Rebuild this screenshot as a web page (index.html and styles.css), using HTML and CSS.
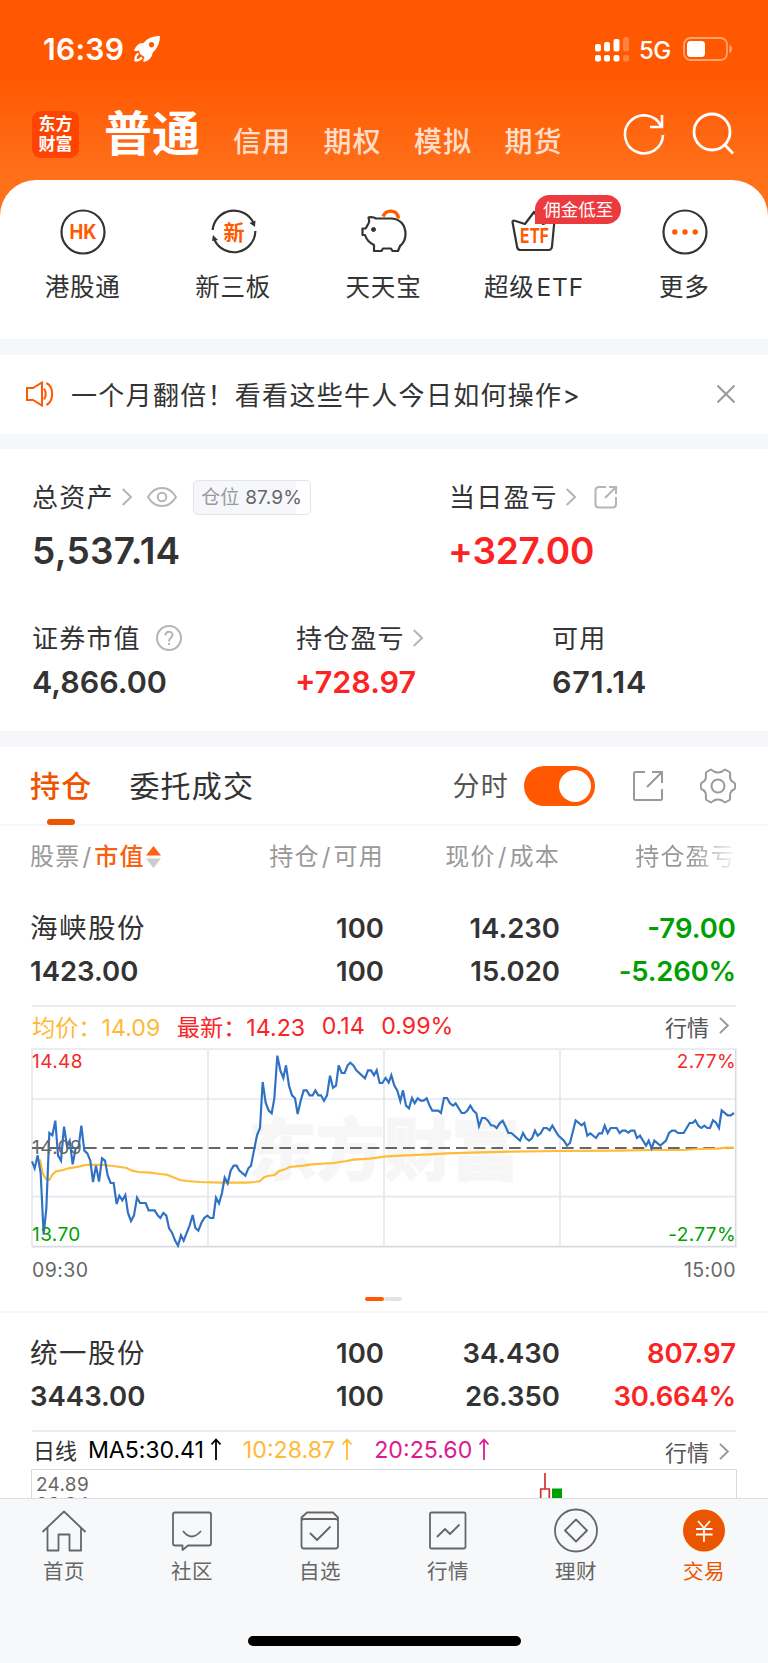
FILE: index.html
```
<!DOCTYPE html>
<html lang="zh-CN">
<head>
    <meta charset="UTF-8">
    <meta name="viewport" content="width=device-width, initial-scale=1.0">
    <title>交易</title>
    <link rel="stylesheet" href="styles.css">
</head>
<body>
    <header class="header">
        <div class="status">
            <span class="time">16:39</span>
            <svg class="rocket" width="28" height="28" viewBox="0 0 28 28">
                <path fill="#fff" fill-rule="evenodd" d="M27 1C20 1 14 3.500 10.500 8C6 7.500 3 10.500 1 15.500C3 16.500 4.500 16 6 15.500L7 19L11.500 22C11 23.500 10 25 10.500 27C16 26 19.500 21.500 19.500 18C24 13.500 27 8 27 1ZM18.500 7A2.700 2.700 0 1 1 18.490 7Z"/>
                <path fill="none" stroke="#fff" stroke-width="2.200" d="M5.500 18.500C3 20 2.300 22.500 2.500 25.500C5.500 25.500 7.500 24.500 9 22.500"/>
            </svg>
            <svg class="signal" width="34" height="25" viewBox="0 0 34 25" fill="#fff">
                <rect x="0" y="7" width="6" height="7.500" rx="2"/>
                <rect x="9" y="5" width="6" height="9.500" rx="2"/>
                <rect x="18.500" y="2" width="6" height="12.500" rx="2"/>
                <rect x="28" y="0" width="6" height="14.500" rx="2" opacity=".25"/>
                <rect x="0" y="18" width="6" height="6.500" rx="2"/>
                <rect x="9" y="18" width="6" height="6.500" rx="2"/>
                <rect x="18.500" y="18" width="6" height="6.500" rx="2"/>
                <rect x="28" y="18" width="6" height="6.500" rx="2" opacity=".25"/>
            </svg>
            <span class="network">5G</span>
            <svg class="battery" width="50" height="24" viewBox="0 0 50 24">
                <rect x="1" y="1" width="43" height="22" rx="6.500" fill="none" stroke="#fff" stroke-width="1.800" opacity=".45"/>
                <rect x="4" y="4" width="18" height="16" rx="3.500" fill="#fff"/>
                <path d="M46.500 8V16Q49 15 49 12T46.500 8Z" fill="#fff" opacity=".5"/>
            </svg>
        </div>
        <nav class="accounts">
            <div class="logo">东方<br>财富</div>
            <strong>普通</strong>
            <span>信用</span>
            <span>期权</span>
            <span>模拟</span>
            <span>期货</span>
            <svg class="refresh" width="44" height="44" viewBox="0 0 44 44" fill="none" stroke="#fff" stroke-width="2.600">
                <path d="M38.800 13.500A19 19 0 1 0 41 23M40 3V15H28"/>
            </svg>
            <svg class="search" width="44" height="44" viewBox="0 0 44 44" fill="none" stroke="#fff" stroke-width="2.800">
                <circle cx="21" cy="20" r="18"/>
                <path d="M33 32L42 41.500"/>
            </svg>
        </nav>
    </header>

    <section class="menu">
        <a class="menu-item">
            <svg width="50" height="50" viewBox="0 0 50 50">
                <circle cx="25" cy="25" r="21.500" fill="none" stroke="#333" stroke-width="2.200"/>
                <text class="icon-text" x="25" y="32" font-size="19.500" textLength="27" lengthAdjust="spacingAndGlyphs">HK</text>
            </svg>
            <span>港股通</span>
        </a>
        <a class="menu-item">
            <svg width="50" height="50" viewBox="0 0 50 50">
                <path fill="none" stroke="#333" stroke-width="2.200" d="M3.600 23A21.500 21.500 0 0 1 44.500 16M46.400 24A21.500 21.500 0 0 1 5.500 33"/>
                <path fill="#333" d="M40.500 16L46.500 13.500L46 20ZM3 34L4 28L9 33Z"/>
                <text class="icon-text" x="25" y="32.500" font-size="21">新</text>
            </svg>
            <span>新三板</span>
        </a>
        <a class="menu-item">
            <svg width="50" height="50" viewBox="0 0 50 50" fill="none" stroke="#333" stroke-width="2.200" stroke-linejoin="round">
                <path d="M17 11.500C14 9.500 12 10 9.500 10.500C10.500 13 10.500 14.500 9.500 16.500C8.500 18 8 20 6.500 21.500H3.500V28H6C7.500 32.500 10.500 36 15 38V44H22.500L24 41.500H32L33.500 44H39L41 39C45 36 46.500 31 46.500 27C46.500 18 41 12 33 11.500Z"/>
                <circle cx="14.500" cy="22.500" r="2" fill="#333" stroke-width="1"/>
                <path stroke="#ff5a00" stroke-width="3.400" d="M24 9.500C27 2.500 38 1.500 39.500 11.500"/>
            </svg>
            <span>天天宝</span>
        </a>
        <a class="menu-item">
            <svg width="50" height="50" viewBox="0 0 50 50">
                <path fill="none" stroke="#333" stroke-width="2.200" stroke-linejoin="round" d="M6.500 14L16 17L25 5L34 17L45.500 13L43 39.500Q42.700 43 39.500 43H11.500Q8.500 43 8 39.500L3.500 15Q3.500 13 6.500 14Z"/>
                <text class="icon-text" x="25.500" y="36" font-size="20" textLength="29" lengthAdjust="spacingAndGlyphs">ETF</text>
            </svg>
            <span>超级<small>ETF</small></span>
            <em class="badge">佣金低至</em>
        </a>
        <a class="menu-item">
            <svg width="50" height="50" viewBox="0 0 50 50">
                <circle cx="25" cy="25" r="21.500" fill="none" stroke="#333" stroke-width="2.200"/>
                <g fill="#ff5a00"><circle cx="14.800" cy="25" r="2.700"/><circle cx="25" cy="25" r="2.700"/><circle cx="35.200" cy="25" r="2.700"/></g>
            </svg>
            <span>更多</span>
        </a>
    </section>

    <section class="notice">
        <svg width="28" height="26" viewBox="0 0 28 26" fill="none" stroke="#ff5a00" stroke-width="2">
            <path d="M1 7H7L16 1.500V24.500L7 19H1ZM18 7.500Q21.500 13 18 18.500M20.500 2C28 6 28 20 20.500 24"/>
        </svg>
        <p>一个月翻倍！看看这些牛人今日如何操作&gt;</p>
        <svg width="18" height="18" viewBox="0 0 18 18" fill="none" stroke="#999" stroke-width="2"><path d="M.5.500L17.500 17.500M17.500.5L.5 17.500"/></svg>
    </section>

    <section class="assets">
        <div class="assets-top">
            <div class="asset">
                <div class="label"><span>总资产</span>
                    <svg class="arrow" width="10" height="18" viewBox="0 0 10 18"><path d="M.7 1L9 9L.7 17"/></svg>
                    <svg class="eye" width="30" height="20" viewBox="0 0 30 20"><path d="M1 10C8-2 22-2 29 10C22 22 8 22 1 10Z"/><circle cx="15" cy="10" r="4.300"/></svg>
                    <div class="ratio">仓位 <b>87.9%</b></div>
                </div>
                <div class="value big">5,537.14</div>
            </div>
            <div class="asset">
                <div class="label"><span>当日盈亏</span>
                    <svg class="arrow" width="10" height="18" viewBox="0 0 10 18"><path d="M.7 1L9 9L.7 17"/></svg>
                    <svg class="share" width="24" height="24" viewBox="0 0 24 24"><path d="M12 2H5Q1.500 2 1.500 5.500V19Q1.500 22.500 5 22.500H18.500Q22 22.500 22 19V12M11 13L21.500 2.500M15 2H22V9"/></svg>
                </div>
                <div class="value big red">+327.00</div>
            </div>
        </div>
        <div class="assets-bottom">
            <div class="asset">
                <div class="label"><span>证券市值</span>
                    <svg class="help" width="26" height="26" viewBox="0 0 26 26"><circle cx="13" cy="13" r="12"/><path d="M9.500 10.500C9.500 5.500 16.500 5.500 16.500 10C16.500 12.500 13 12.500 13 16.500M13 18V20"/></svg>
                </div>
                <div class="value">4,866.00</div>
            </div>
            <div class="asset">
                <div class="label"><span>持仓盈亏</span>
                    <svg class="arrow" width="10" height="18" viewBox="0 0 10 18"><path d="M.7 1L9 9L.7 17"/></svg>
                </div>
                <div class="value red">+728.97</div>
            </div>
            <div class="asset">
                <div class="label"><span>可用</span></div>
                <div class="value last-value">671.14</div>
            </div>
        </div>
    </section>

    <section class="positions">
        <div class="tabs">
            <span class="tab active">持仓</span>
            <span class="tab">委托成交</span>
            <span class="mode">分时</span>
            <span class="switch"></span>
            <svg class="export" width="32" height="32" viewBox="0 0 32 32" fill="none" stroke="#999" stroke-width="2">
                <path d="M13 2H3.500Q2 2 2 3.500V28.500Q2 30 3.500 30H28.500Q30 30 30 28.500V19M15 17L30 2M20 2H30V13"/>
            </svg>
            <svg class="gear" width="36" height="36" viewBox="0 0 36 36" fill="none" stroke="#999" stroke-width="2" stroke-linejoin="round">
                <path d="M11 1.500L14 3.500Q18 5.500 22 3.500L25 1.500L29.500 4Q30.500 5 30 8Q30 13 34 14.500Q35.300 15.500 35.300 18T34 21.500Q30 23 30 28Q30.500 31 29.500 32L25 34.500L22 32.500Q18 30.500 14 32.500L11 34.500L6.500 32Q5.500 31 6 28Q6 23 2 21.500Q.7 20.500.7 18T2 14.500Q6 13 6 8Q5.500 5 6.500 4Z"/>
                <circle cx="18" cy="18" r="6.500"/>
            </svg>
        </div>

        <div class="row head">
            <div>股票<i>/</i><b>市值</b><svg width="15" height="22" viewBox="0 0 15 22"><path fill="#ff6114" d="M7.500 0L15 9.500H0Z"/><path fill="#ccc" d="M7.500 22L15 12.500H0Z"/></svg></div>
            <div>持仓<i>/</i>可用</div>
            <div>现价<i>/</i>成本</div>
            <div class="fade">持仓盈亏</div>
        </div>

        <div class="stock">
            <div class="row">
                <div><span class="name">海峡股份</span><br>1423.00</div>
                <div>100<br>100</div>
                <div>14.230<br>15.020</div>
                <div class="green">-79.00<br><span class="percent">-5.260%</span></div>
            </div>
            <div class="quote">
                <span class="avg">均价：14.09</span>
                <span class="last">最新：14.23</span>
                <span class="last">0.14</span>
                <span class="last">0.99%</span>
                <a>行情<svg width="10" height="17" viewBox="0 0 10 18"><path d="M.7 1L9 9L.7 17"/></svg></a>
            </div>
            <svg class="chart" width="706" height="200" viewBox="93 54 2118 600" fill="none">
                <g class="watermark"><text x="745" y="434" textLength="815">东方财富</text></g>
                <g stroke="#e6e8f0" stroke-width="5">
                    <path d="M96 207H2208M96 500H2208M624 60V648M1152 60V648M1680 60V648"/>
                    <path d="M96 650V57H2208"/>
                    <path stroke="#d8dbe3" d="M96 650H2207V57"/>
                </g>
                <path stroke="#666" stroke-width="6" stroke-dasharray="35 18" d="M96 354H2202"/>
                <path stroke="#ffbc38" stroke-width="6.500" d="M120 388L128 430L137 446L148 450L157 434L168 424L190 420L205 415L240 409L255 405L275 404L310 405L340 408L380 414L396 422L415 426L450 428L480 432L500 434L520 442L540 450L560 453L600 456L660 458L740 458L765 456L780 453L792 442L802 438L824 435L836 424L855 418L868 411L910 407L935 403L1000 399L1040 393L1060 389L1110 386L1152 380L1200 377L1290 373L1340 370L1440 367L1530 365L1680 363L1860 362L1950 360L2050 360L2090 357L2150 356L2180 353L2202 353"/>
                <path stroke="#2f72c3" stroke-width="6.500" d="M96 394L104 415L113 376L122 430L131 614L139 535L148 309L157 316L166 272L174 376L183 392L192 290L201 348L209 332L218 403L227 355L236 350L244 287L253 362L262 370L271 392L279 456L288 407L297 455L306 385L315 392L323 436L332 459L341 459L350 522L358 497L367 511L376 495L384 549L393 573L402 556L411 503L420 519L437 519L446 541L464 541L473 556L481 564L490 549L499 557L507 594L516 608L525 631L534 647L543 616L551 632L569 586L578 555L586 594L595 602L604 579L613 564L622 557L631 564L640 564L648 503L657 520L666 489L674 443L683 460L692 422L701 407L710 407L718 422L736 437L745 415L753 407L762 361L771 316L780 294L788 156L797 218L806 242L815 250L823 205L832 77L841 121L850 144L858 106L867 167L876 196L885 205L893 252L902 212L911 181L920 181L929 196L938 196L946 181L955 196L963 196L972 212L981 196L990 137L999 173L1008 167L1016 106L1025 129L1034 129L1043 106L1051 98L1060 106L1069 121L1095 145L1104 121L1113 121L1122 136L1130 121L1139 159L1147 159L1157 144L1166 158L1174 136L1183 167L1192 182L1201 213L1209 181L1218 227L1227 235L1236 204L1244 220L1253 205L1262 212L1271 212L1280 205L1289 227L1297 242L1315 242L1323 249L1332 204L1341 204L1350 220L1359 227L1367 220L1385 249L1394 249L1402 242L1411 227L1420 242L1429 250L1437 289L1446 264L1455 264L1464 272L1473 286L1482 287L1490 294L1499 280L1508 272L1517 290L1525 309L1534 309L1560 332L1569 309L1578 325L1587 332L1596 325L1605 302L1613 317L1622 310L1631 294L1640 294L1649 301L1657 287L1675 317L1692 332L1701 347L1710 339L1727 271L1745 286L1753 279L1762 317L1771 310L1788 324L1797 310L1806 310L1814 287L1823 309L1832 294L1850 294L1859 309L1867 302L1876 302L1885 308L1893 302L1903 302L1911 324L1920 317L1938 347L1946 332L1955 355L1963 332L1981 347L1998 332L2007 309L2016 302L2025 302L2034 309L2051 309L2069 279L2078 279L2086 271L2095 287L2104 294L2113 287L2122 294L2130 294L2139 271L2148 278L2157 294L2165 241L2183 256L2192 256L2202 249"/>
                <g class="scale">
                    <text x="96" y="114" fill="#f22b2b">14.48</text>
                    <text x="96" y="373" fill="#666">14.09</text>
                    <text x="96" y="632" fill="#00a000">13.70</text>
                    <text x="2208" y="114" fill="#f22b2b" text-anchor="end">2.77%</text>
                    <text x="2208" y="632" fill="#00a000" text-anchor="end">-2.77%</text>
                </g>
            </svg>
            <div class="times"><span>09:30</span><span>15:00</span></div>
            <div class="pager"><i class="on"></i><i></i></div>
        </div>

        <div class="stock second">
            <div class="row">
                <div><span class="name">统一股份</span><br>3443.00</div>
                <div>100<br>100</div>
                <div>34.430<br>26.350</div>
                <div class="red">807.97<br><span class="percent">30.664%</span></div>
            </div>
            <div class="quote ma">
                <span class="day">日线</span>
                <span class="ma5">MA5:30.41<svg width="10" height="23" viewBox="0 0 10 23"><path d="M5 22V2M.5 6.500L5 1.500L9.500 6.500"/></svg></span>
                <span class="ma10">10:28.87<svg width="10" height="23" viewBox="0 0 10 23"><path d="M5 22V2M.5 6.500L5 1.500L9.500 6.500"/></svg></span>
                <span class="ma20">20:25.60<svg width="10" height="23" viewBox="0 0 10 23"><path d="M5 22V2M.5 6.500L5 1.500L9.500 6.500"/></svg></span>
                <a>行情<svg width="10" height="17" viewBox="0 0 10 18"><path d="M.7 1L9 9L.7 17"/></svg></a>
            </div>
            <div class="kline">
                <div>24.89<br>23.84</div>
                <svg width="24" height="30" viewBox="0 0 24 30"><path d="M6 3V19M1.700 30V19H10.300V30" fill="none" stroke="#d32f2f" stroke-width="1.700"/><rect x="13" y="18.500" width="10" height="12" fill="#00a000"/></svg>
            </div>
        </div>
    </section>

    <footer class="tabbar">
        <nav>
            <a><svg width="46" height="46" viewBox="0 0 46 46"><path d="M1.500 24L23 3.500L44.500 24M6.500 20V42.500H17.500V26.500H28.500V42.500H40V20"/></svg>首页</a>
            <a><svg width="46" height="46" viewBox="0 0 46 46"><path d="M6 4.500H40Q42 4.500 42 6.500V35.500Q42 37.500 40 37.500H19L13.500 42V37.500H6Q4 37.500 4 35.500V6.500Q4 4.500 6 4.500ZM14 23Q22.500 34 32 23"/></svg>社区</a>
            <a><svg width="46" height="46" viewBox="0 0 46 46"><path d="M10 4.500H36L41 9.500V38Q41 40.500 38.500 40.500H7Q4.500 40.500 4.500 38V9.500ZM4.500 13Q4.500 11 7 11H38.500Q41 11 41 13M13 25L20 32L33.500 18.500"/></svg>自选</a>
            <a><svg width="46" height="46" viewBox="0 0 46 46"><rect x="5" y="4.500" width="35.500" height="36" rx="1.500"/><path d="M12 29L20 21L25 26L34.500 16.500"/></svg>行情</a>
            <a><svg width="46" height="46" viewBox="0 0 46 46"><circle cx="23" cy="22.500" r="21"/><path d="M23 11.500L34 22.500L23 33.500L12 22.500Z"/></svg>理财</a>
            <a class="active"><svg width="46" height="46" viewBox="0 0 46 46"><circle cx="23" cy="22.500" r="21"/><path d="M17 13L23 20L29 13M15 21H31.500M15 26.500H31.500M23 20V34"/></svg>交易</a>
        </nav>
        <div class="home"></div>
    </footer>
</body>
</html>
```
FILE: styles.css
```
* {
    box-sizing: border-box;
}
body {
    margin: 0;
    width: 768px;
    height: 1663px;
    overflow: hidden;
    display: flex;
    flex-direction: column;
    font-family: Inter, "Noto Sans CJK SC", sans-serif;
    color: #333;
    background-color: #f6f7fa;
}
svg {
    display: block;
    flex: none;
}

/* header */
.header {
    height: 220px;
    flex: none;
    color: #fff;
    background: linear-gradient(#ff5800 75px, #ff701b 175px);
}
.status {
    height: 98px;
    padding: 0 35px 0 43px;
    display: flex;
    align-items: center;
    font-weight: 600;
}
.time {
    width: 83px;
    font-size: 30px;
    letter-spacing: 0.3px;
    white-space: nowrap;
}
.rocket {
    margin-left: 7px;
}
.signal {
    margin-left: auto;
}
.network {
    margin: 3px 12px 0 10px;
    width: 32px;
    font-size: 24px;
    font-weight: 500;
    letter-spacing: -0.5px;
}
.accounts {
    height: 72px;
    padding: 0 33px 0 32px;
    display: flex;
    align-items: center;
}
.logo {
    width: 47px;
    height: 47px;
    border-radius: 9px;
    background-color: #ff4300;
    font-size: 17px;
    font-weight: 700;
    line-height: 20px;
    padding-top: 3px;
    text-align: center;
}
.accounts strong {
    width: 96px;
    margin: 0 33px 0 25px;
    font-size: 48px;
    line-height: 60px;
    white-space: nowrap;
}
.accounts span {
    width: 60px;
    margin: 12px 30.5px 0 0;
    font-size: 28px;
    font-weight: 500;
    letter-spacing: 1px;
    color: rgba(255, 255, 255, 0.8);
}
.refresh {
    margin-left: auto;
}
.search {
    margin-left: 25px;
}

/* quick menu */
.menu {
    height: 159px;
    flex: none;
    margin-top: -40px;
    padding: 27px 8px 0;
    display: grid;
    grid-template-columns: repeat(5, 1fr);
    background-color: #fff;
    border-radius: 36px 36px 0 0;
}
.menu-item {
    position: relative;
    display: flex;
    flex-direction: column;
    align-items: center;
    font-size: 24.5px;
    line-height: 36px;
    letter-spacing: 0.8px;
}
.menu-item span {
    margin: 12px 1px 0 0;
}
.menu-item small {
    margin-left: 2px;
    font-size: 24.5px;
}
.icon-text {
    fill: #ff5a00;
    font-weight: 700;
    text-anchor: middle;
    letter-spacing: 0;
}
.badge {
    position: absolute;
    left: 76px;
    top: -12px;
    width: 86px;
    height: 29px;
    border-radius: 15px 15px 15px 0;
    background-color: #ec3b3f;
    color: #fff;
    font-size: 17.5px;
    font-style: normal;
    line-height: 29px;
    letter-spacing: 0;
    text-align: center;
}

/* notice */
.notice {
    height: 79px;
    flex: none;
    margin: 16px 0;
    padding: 0 33px 2px 26px;
    display: flex;
    align-items: center;
    background-color: #fff;
    font-size: 26px;
}
.notice p {
    flex: 1;
    margin: 0 0 0 17px;
    letter-spacing: 1.3px;
}

/* assets */
.assets {
    height: 282px;
    flex: none;
    margin-top: -1px;
    padding: 27px 0 0 32px;
    background-color: #fff;
}
.assets-top {
    display: grid;
    grid-template-columns: 417px 1fr;
    height: 141px;
}
.assets-bottom {
    display: grid;
    grid-template-columns: 264px 256px 1fr;
}
.label {
    display: flex;
    align-items: center;
    height: 42px;
    font-size: 26px;
    letter-spacing: 1.2px;
}
.label span {
    margin-top: -4px;
}
.label svg {
    fill: none;
    stroke: #b5b5b5;
    stroke-width: 2;
}
.label .arrow {
    margin-left: 8px;
}
.label .eye {
    margin-left: 15px;
}
.label .share {
    margin-left: 18px;
}
.label .help {
    margin-left: 15px;
}
.ratio {
    width: 118px;
    height: 35px;
    margin-left: 16px;
    border: 1px solid #e3e4e8;
    border-radius: 5px;
    background: linear-gradient(90deg, #f6f7fa 87.9%, #fff 87.9%);
    color: #999;
    font-size: 19px;
    line-height: 34px;
    letter-spacing: 0.2px;
    text-align: center;
    white-space: nowrap;
}
.ratio b {
    color: #666;
    font-weight: 400;
}
.value {
    font-size: 30.5px;
    font-weight: 600;
    line-height: 46px;
}
.value.red {
    margin-left: -1px;
}
.value.last-value {
    letter-spacing: 0.8px;
}
.value.big {
    font-size: 37px;
    line-height: 66px;
    letter-spacing: 0.3px;
}
.value.big.red {
    letter-spacing: -0.2px;
}
.red {
    color: #fb2424;
}
.green {
    color: #00a000;
}

/* positions */
.positions {
    flex: 1;
    min-height: 0;
    overflow: hidden;
    margin-top: 16px;
    background-color: #fff;
}
.tabs {
    height: 79px;
    padding: 0 32px 0 30px;
    display: flex;
    align-items: center;
    border-bottom: 2px solid #f6f7f9;
    font-size: 30px;
    letter-spacing: 1.2px;
}
.tab {
    margin: -4px 37px 0 0;
}
.tab.active {
    position: relative;
    color: #ee5500;
    font-weight: 500;
}
.tab.active::after {
    content: "";
    position: absolute;
    left: 17px;
    bottom: -19px;
    width: 28px;
    height: 6px;
    border-radius: 3px;
    background-color: #ee5500;
}
.mode {
    margin: -2px 0 0 auto;
    font-size: 27px;
    color: #555;
}
.switch {
    width: 71px;
    height: 40px;
    margin: 0 37px 0 15px;
    padding: 4px;
    border-radius: 20px;
    background-color: #ff5800;
}
.switch::after {
    content: "";
    display: block;
    width: 32px;
    height: 32px;
    margin-left: auto;
    border-radius: 50%;
    background-color: #fff;
}
.gear {
    margin-left: 36px;
}
.row {
    display: grid;
    grid-template-columns: 177px 177px 176px 176px;
    padding: 0 32px 0 30px;
    font-size: 27.5px;
    font-weight: 600;
    line-height: 42.5px;
}
.row div {
    text-align: right;
    white-space: nowrap;
}
.row div:first-child {
    text-align: left;
}
.name {
    font-weight: 400;
    font-size: 27.5px;
    letter-spacing: 1.5px;
}
.percent {
    letter-spacing: -0.2px;
}
.head {
    height: 62px;
    font-size: 24px;
    font-weight: 400;
    line-height: 62px;
    letter-spacing: 1.2px;
    color: #999;
}
.head div:first-child {
    display: flex;
    align-items: center;
}
.head i {
    margin: 0 2px;
    font-style: normal;
}
.head b {
    color: #f95f10;
    font-weight: 500;
}
.head svg {
    margin-left: 1px;
}
.head .fade {
    -webkit-mask-image: linear-gradient(90deg, #000 75%, transparent 102%);
    mask-image: linear-gradient(90deg, #000 75%, transparent 102%);
}
.stock {
    height: 425px;
    padding-top: 19px;
    border-bottom: 2px solid #f6f6f8;
}
.quote {
    height: 43px;
    margin: 13px 32px 0;
    padding-bottom: 4px;
    display: flex;
    align-items: center;
    border-top: 2px solid #ececee;
    font-size: 23.2px;
    white-space: nowrap;
}
.quote span {
    margin-right: 16.5px;
}
.quote a {
    display: flex;
    align-items: center;
    margin: 0 7px 0 auto;
    color: #555;
    font-size: 22px;
}
.quote a svg {
    margin-left: 10px;
    fill: none;
    stroke: #999;
    stroke-width: 2;
}
.avg {
    color: #ffb938;
}
.last {
    color: #fb2424;
}
.chart {
    margin: 0 31px;
}
.watermark {
    fill: #f6f6f7;
    stroke: #f6f6f7;
    stroke-width: 3px;
    font-size: 206px;
    font-weight: 900;
}
.scale {
    font-size: 57px;
    letter-spacing: 1.2px;
}
.times {
    display: flex;
    justify-content: space-between;
    margin: 10px 32px 0;
    font-size: 19.5px;
    line-height: 24px;
    letter-spacing: 0.4px;
    color: #666;
}
.pager {
    display: flex;
    justify-content: center;
    margin: 15px 1px 0 0;
}
.pager i {
    width: 18.5px;
    height: 4px;
    border-radius: 2px;
    background-color: #e3e3e3;
}
.pager .on {
    background-color: #ff5800;
}
.second {
    border: 0;
}
.ma {
    height: 39px;
    padding-bottom: 2px;
}
.ma .day {
    margin: -2px 11px 0 1px;
    font-size: 22px;
}
.ma span svg {
    display: inline-block;
    margin-left: 7px;
    vertical-align: -3px;
    fill: none;
    stroke: currentColor;
    stroke-width: 1.8;
}
.ma span + span {
    margin-right: 22px;
}
.ma5 {
    color: #000;
    letter-spacing: -0.1px;
}
.ma10 {
    color: #ffb938;
}
.ma20 {
    color: #dd1a92;
}
.ma a {
    padding-top: 3px;
}
.kline {
    height: 100px;
    margin: 0 31px;
    padding: 5px 0 0 4px;
    display: flex;
    border: 1.5px solid #d9dbe3;
    font-size: 19px;
    line-height: 20px;
    letter-spacing: 0.3px;
    color: #666;
}
.kline svg {
    margin: -5px 0 0 450px;
}

/* bottom bar */
.tabbar {
    height: 165px;
    flex: none;
    padding-top: 9px;
    border-top: 1px solid #dcdde6;
    background-color: #f7f8fa;
}
.tabbar nav {
    display: grid;
    grid-template-columns: repeat(6, 1fr);
}
.tabbar a {
    display: flex;
    flex-direction: column;
    align-items: center;
    font-size: 20.5px;
    line-height: 36px;
    letter-spacing: 0.5px;
    color: #666;
}
.tabbar svg {
    fill: none;
    stroke: #666;
    stroke-width: 1.8;
    stroke-linejoin: round;
}
.tabbar .active {
    color: #ec5500;
}
.tabbar .active svg {
    stroke: #fff;
}
.tabbar .active circle {
    fill: #ec5500;
    stroke: none;
}
.home {
    width: 273px;
    height: 10px;
    margin: 46px auto 0;
    border-radius: 5px;
    background-color: #000;
}
```
